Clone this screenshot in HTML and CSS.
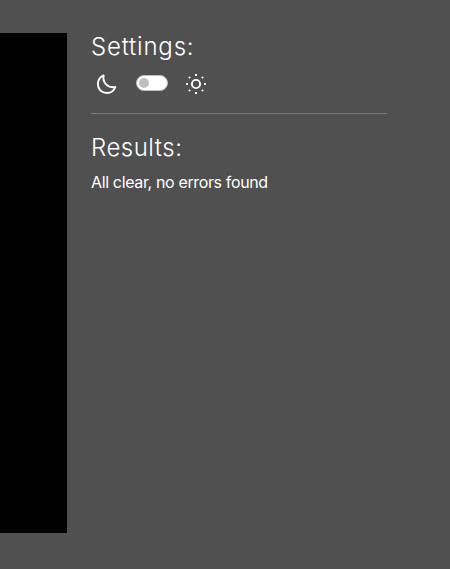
FILE: index.html
```
<!DOCTYPE html>
<html lang="en">
<head>
<meta charset="utf-8">
<title>Settings</title>
<link rel="stylesheet" href="styles.css">
</head>
<body>
<main class="layout">
  <div class="editor"></div>
  <aside class="panel">
    <section class="settings">
      <h2 class="heading heading-settings">Settings:</h2>
      <div class="theme">
        <svg class="icon moon" viewBox="0 0 22 22"><path d="M8.6 2.4C7.4 9.5 12.4 15.4 20.4 14C19 17.7 15.8 20 11.9 20C6.7 20 2.9 16.3 2.9 11.3C2.9 7.4 5 4 8.6 2.4Z"/></svg>
        <span class="switch"><span class="knob"></span></span>
        <svg class="icon" viewBox="0 0 22 22"><circle cx="11" cy="11" r="4.1"/><path d="M11 1.1v1.8M11 19.1v1.8M1.1 11h1.8M19.1 11h1.8M3.9 3.9l1.3 1.3M16.8 16.8l1.3 1.3M3.9 18.1l1.3-1.3M16.8 5.2l1.3-1.3"/></svg>
      </div>
    </section>
    <section class="results">
      <h2 class="heading heading-results">Results:</h2>
      <p class="message">All clear, no errors found</p>
    </section>
  </aside>
</main>
</body>
</html>
```
FILE: styles.css
```
* { box-sizing: border-box; }
body { margin: 0; height: 569px; background: #505050; color: #fff; font-family: Inter, sans-serif; overflow: hidden; }
.layout { display: flex; gap: 24px; padding-top: 33px; }
.editor { width: 67px; height: 500px; background: #000; }
.panel { width: 296px; }
.settings { height: 81px; border-bottom: 1px solid #7c7c7c; }
.heading { width: max-content; margin: 0; font-size: 24px; line-height: 28px; font-weight: 300; white-space: nowrap; }
.heading-settings { letter-spacing: 0.8px; }
.heading-results { letter-spacing: 0.5px; }
.theme { display: flex; align-items: flex-start; padding: 12px 0 0 4px; }
.icon { width: 22px; height: 22px; fill: none; stroke: #fff; stroke-width: 1.9; stroke-linejoin: round; }
.switch { width: 32px; height: 16px; margin: 2px 17px 0 19px; padding: 2px; border: 1px solid #bfbfbf; border-radius: 8px; background: #fff; }
.knob { display: block; width: 10px; height: 10px; border-radius: 50%; background: #bfbfbf; }
.results { padding-top: 20px; }
.message { width: max-content; margin: 8px 0 0; font-size: 16px; line-height: 24px; letter-spacing: -0.36px; white-space: nowrap; }
```
